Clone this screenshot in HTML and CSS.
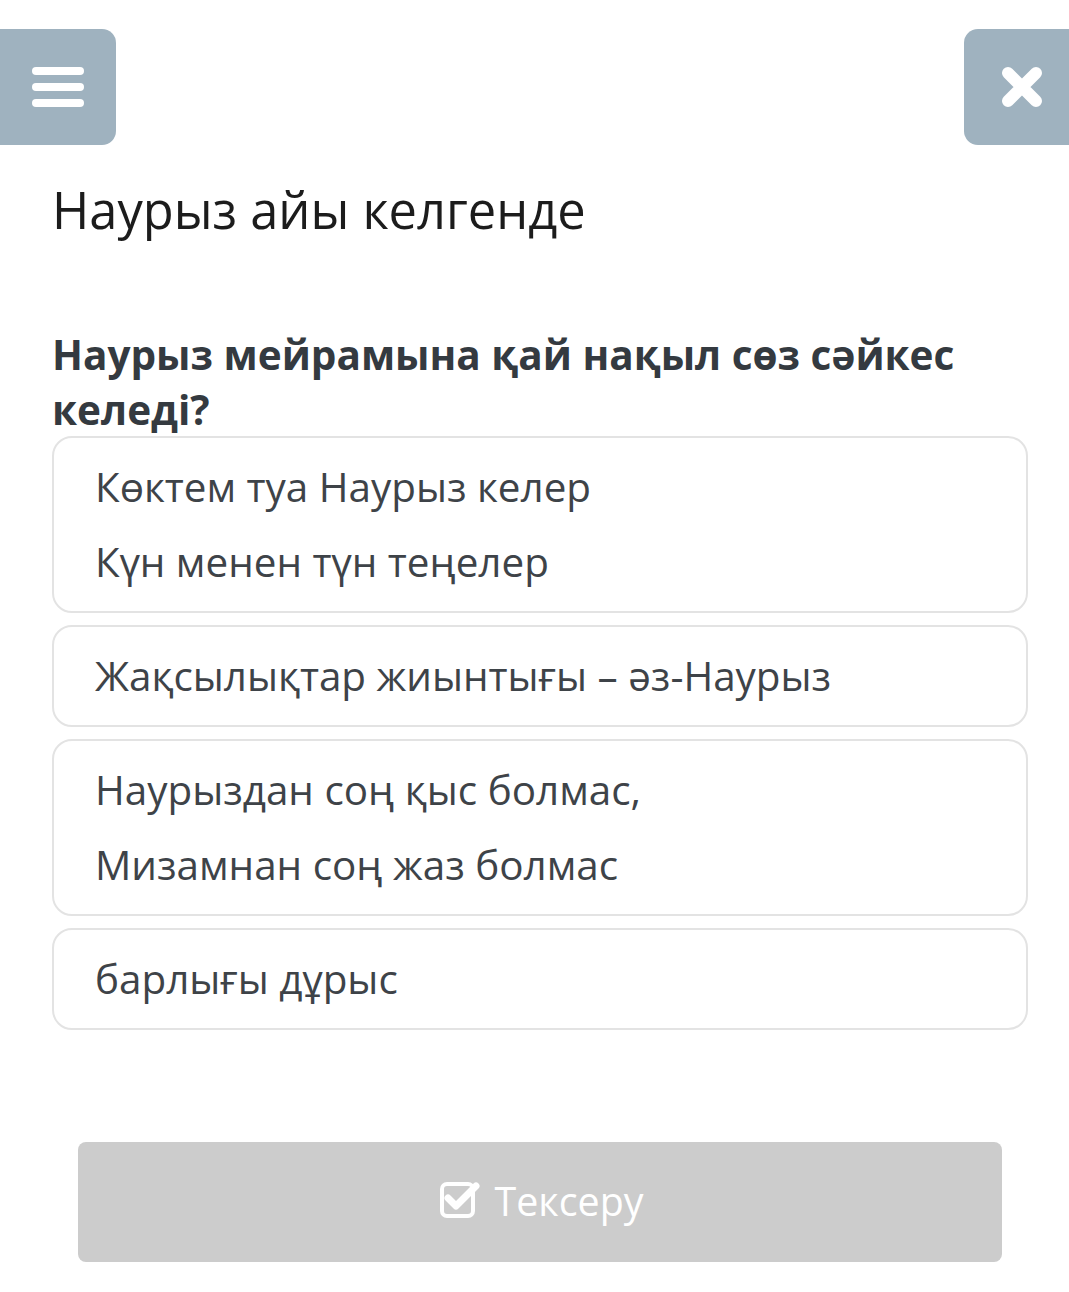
FILE: index.html
```html
<!DOCTYPE html>
<html lang="kk">
<head>
<meta charset="utf-8">
<title>Наурыз айы келгенде</title>
<link rel="stylesheet" href="styles.css">
</head>
<body>
<div class="page">
  <header class="topbar">
    <button class="icon-btn menu-btn" aria-label="Мәзір">
      <svg width="52" height="44" viewBox="0 0 52 44"><rect x="0" y="2" width="52" height="8" rx="4" fill="#fff"/><rect x="0" y="18" width="52" height="8" rx="4" fill="#fff"/><rect x="0" y="34" width="52" height="8" rx="4" fill="#fff"/></svg>
    </button>
    <button class="icon-btn close-btn" aria-label="Жабу">
      <svg width="42" height="42" viewBox="0 0 42 42"><path d="M7 7 L35 35 M35 7 L7 35" stroke="#fff" stroke-width="12" stroke-linecap="round"/></svg>
    </button>
  </header>
  <main class="content">
    <h1 class="title">Наурыз айы келгенде</h1>
    <h2 class="question">Наурыз мейрамына қай нақыл сөз сәйкес келеді?</h2>
    <div class="options">
      <div class="option"><p>Көктем туа Наурыз келер</p><p>Күн менен түн теңелер</p></div>
      <div class="option"><p>Жақсылықтар жиынтығы – әз-Наурыз</p></div>
      <div class="option"><p>Наурыздан соң қыс болмас,</p><p>Мизамнан соң жаз болмас</p></div>
      <div class="option"><p>барлығы дұрыс</p></div>
    </div>
    <div class="actions">
      <button class="check-btn">
        <svg width="44" height="44" viewBox="0 0 44 44"><rect x="5" y="6" width="31" height="32" rx="5" fill="none" stroke="#fff" stroke-width="4"/><path d="M11 20 L19 28 L39 8" fill="none" stroke="#fff" stroke-width="7" stroke-linecap="round" stroke-linejoin="round"/></svg>
        <span>Тексеру</span>
      </button>
    </div>
  </main>
</div>
</body>
</html>
```
FILE: styles.css
```css
* { box-sizing: border-box; }
html, body { margin: 0; padding: 0; background: #fff; }
body { font-family: "Open Sans", "Noto Sans", sans-serif; }
.page { width: 1069px; }
.topbar {
  display: flex;
  justify-content: space-between;
  padding-top: 29px;
}
.icon-btn {
  border: 0;
  background: #9fb2bf;
  height: 116px;
  display: flex;
  align-items: center;
  justify-content: center;
  padding: 0;
}
.menu-btn { width: 116px; border-radius: 0 14px 14px 0; }
.close-btn { width: 105px; border-radius: 14px 0 0 14px; padding-left: 11px; padding-top: 0; }
.content { padding: 0 41px 0 52px; }
.title {
  margin: 31px 0 0;
  font-size: 50.6px;
  font-weight: 400;
  line-height: 68px;
  color: #1c1c1c;
}
.question {
  margin: 83px 0 0;
  font-size: 40.5px;
  font-weight: 700;
  line-height: 55px;
  color: #343a40;
}
.options {
  margin-top: -1px;
  display: flex;
  flex-direction: column;
  gap: 12px;
}
.option {
  border: 2px solid #e3e3e3;
  border-radius: 20px;
  padding: 11px 41px 12px;
}
.option p {
  margin: 0;
  font-size: 40.4px;
  line-height: 75px;
  color: #3e4348;
}
.actions {
  padding: 112px 26px 0 26px;
}
.check-btn {
  width: 924px;
  height: 120px;
  border: 0;
  border-radius: 8px;
  background: #cccccc;
  display: flex;
  align-items: center;
  justify-content: center;
  gap: 14px;
  font-family: "Open Sans", "Noto Sans", sans-serif;
  font-size: 39.4px;
  color: #fff;
  padding: 0;
}
.check-btn svg { margin-top: -4px; }
.check-btn span { line-height: 1; }
```
